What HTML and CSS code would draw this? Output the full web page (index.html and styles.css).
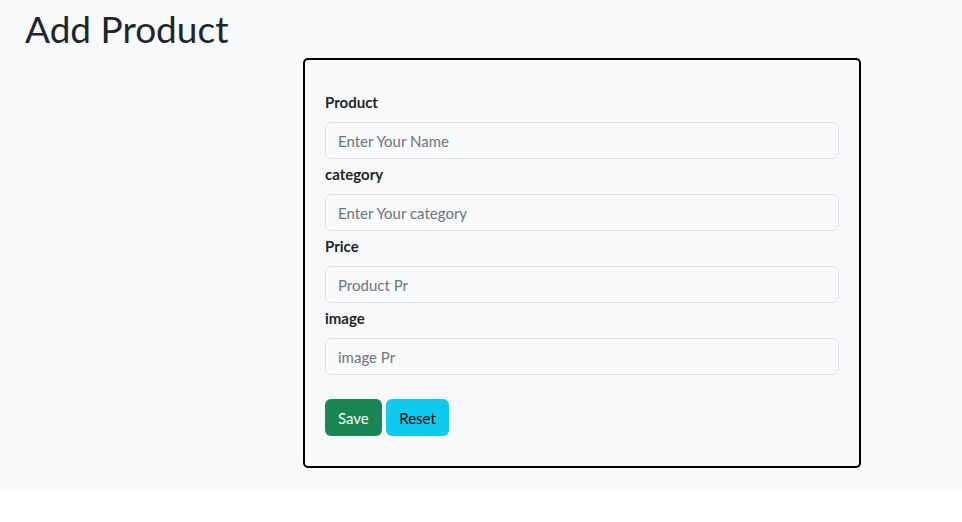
FILE: index.html
```html
<!DOCTYPE html>
<html lang="en">
<head>
<meta charset="utf-8">
<title>Add Product</title>
<link rel="stylesheet" href="styles.css">
</head>
<body>
<main class="page">
  <h1 class="title">Add Product</h1>
  <form class="card">
    <div class="field">
      <label class="label" for="p">Product</label>
      <input class="input" id="p" type="text" placeholder="Enter Your Name">
    </div>
    <div class="field">
      <label class="label" for="c">category</label>
      <input class="input" id="c" type="text" placeholder="Enter Your category">
    </div>
    <div class="field">
      <label class="label" for="pr">Price</label>
      <input class="input" id="pr" type="text" placeholder="Product Pr">
    </div>
    <div class="field">
      <label class="label" for="i">image</label>
      <input class="input" id="i" type="text" placeholder="image Pr">
    </div>
    <div class="actions">
      <button type="button" class="btn btn-save">Save</button>
      <button type="reset" class="btn btn-reset">Reset</button>
    </div>
  </form>
</main>
</body>
</html>
```
FILE: styles.css
```css
* { box-sizing: border-box; }
html, body { margin: 0; padding: 0; background: #fff; }
body {
  font-family: "Lato", "Open Sans", sans-serif;
  color: #212529;
}
.page {
  background: #f8f9fa;
  height: 490px;
  padding: 6px 0 0 25px;
}
.title {
  margin: 0;
  font-size: 37px;
  font-weight: 400;
  line-height: 46px;
}
.card {
  margin: 6px 0 0 278px;
  width: 558px;
  height: 410px;
  border: 2px solid #000;
  border-radius: 5px;
  padding: 27px 20px 0 20px;
  display: flex;
  flex-direction: column;
}
.field {
  display: flex;
  flex-direction: column;
}
.label {
  font-size: 15px;
  font-weight: 700;
  line-height: 22px;
  margin: 4px 0 9px;
}
.input {
  height: 37px;
  border: 1px solid #dee2e6;
  border-radius: 6px;
  background: #f8f9fa;
  padding: 0 12px;
  font: inherit;
  font-size: 15px;
  color: #212529;
}
.input::placeholder { color: #6c757d; }
.actions {
  display: flex;
  gap: 4px;
  margin-top: 24px;
}
.btn {
  height: 37px;
  border: none;
  border-radius: 6px;
  padding: 0 13px;
  font: inherit;
  font-size: 15px;
}
.btn-save { background: #198754; color: #fff; }
.btn-reset { background: #0dcaf0; color: #000; padding: 0 13.5px; }
```
